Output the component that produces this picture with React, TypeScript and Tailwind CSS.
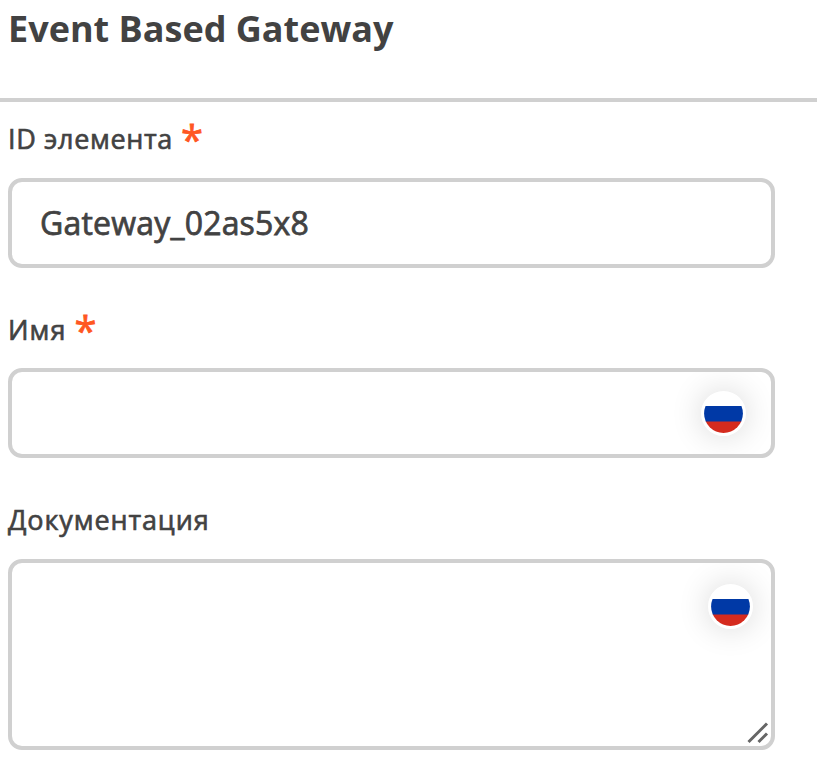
function Flag() {
  return (
    <span className="block size-[45px] shrink-0 rounded-full border-[3px] border-white bg-white shadow-[0_0_32px_rgba(0,0,0,0.16)]">
      <svg viewBox="0 0 39 39" className="block size-full">
        <defs>
          <clipPath id="disc"><circle cx="19.5" cy="19.5" r="19.4" /></clipPath>
        </defs>
        <g clipPath="url(#disc)">
          <rect width="39" height="13" fill="#fff" />
          <rect y="12" width="39" height="16" fill="#0039a6" />
          <rect y="27.5" width="39" height="12" fill="#d52b1e" />
        </g>
      </svg>
    </span>
  );
}

function Label({ text, required, tracking = "tracking-[0.65px]" }: { text: string; required?: boolean; tracking?: string }) {
  return (
    <div className="flex h-[38px] items-center gap-2 text-[27px] leading-[38px] font-medium">
      <span className={`${tracking} [-webkit-text-stroke:0.65px_#424242]`}>{text}</span>
      {required && <span className="pt-0.5 text-[40px] text-[#ff5722] [-webkit-text-stroke:0.8px_#ff5722]">*</span>}
    </div>
  );
}

export default function App() {
  return (
    <main className="h-[776px] w-[817px] overflow-hidden bg-white font-['Open_Sans','Noto_Sans',sans-serif] text-[#424242]">
      <header className="h-[102px] border-b-4 border-[#d0d0d0] pl-2">
        <h1 className="pt-1 text-[36px] leading-[50px] font-bold">Event Based Gateway</h1>
      </header>
      <form className="w-[775px] pl-2">
        <div className="pt-[18px]"><Label text="ID элемента" required /></div>
        <div className="mt-5 flex h-[90px] items-center rounded-[14px] border-4 border-[#d0d0d0] pl-7 text-[32px] font-medium tracking-[0.2px] [-webkit-text-stroke:0.75px_#424242]">Gateway_02as5x8</div>
        <div className="mt-[43px]"><Label text="Имя" required tracking="tracking-[1.1px]" /></div>
        <div className="mt-[19px] flex h-[90px] items-center justify-end overflow-hidden rounded-[14px] border-4 border-[#d0d0d0] pr-[25px]"><Flag /></div>
        <div className="mt-[43px]"><Label text="Документация" tracking="tracking-[0.88px]" /></div>
        <div className="mt-[20px] flex h-[191px] flex-col items-end justify-between overflow-hidden rounded-[14px] border-4 border-[#d0d0d0] pt-[21px] pr-[2px] pb-[2px]">
          <div className="pr-4"><Flag /></div>
          <svg viewBox="0 0 22 22" className="size-[22px]" stroke="#666" strokeWidth="3"><path d="M1.5 20 20 1.5M11.5 20l8.5-8.5" /></svg>
        </div>
      </form>
    </main>
  );
}
